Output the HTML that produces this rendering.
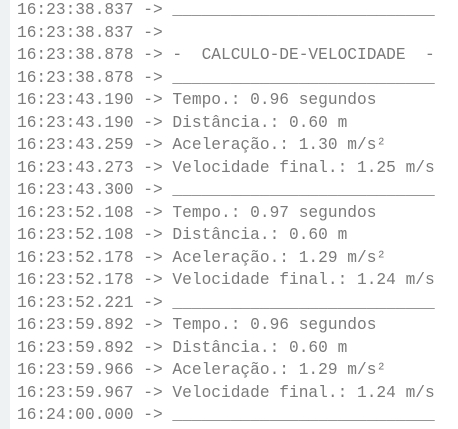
<!DOCTYPE html>
<html><head><meta charset="utf-8"><style>
html,body{margin:0;padding:0;background:#fff;width:458px;height:429px;overflow:hidden}
.strip{position:absolute;left:0;top:0;width:10px;height:429px;background:#eef2f3}
pre{position:absolute;left:17px;top:-1px;margin:0;font-family:"Liberation Mono",monospace;font-size:16.2px;line-height:22.5px;color:#7a7a7a;white-space:pre}
</style></head><body><div class="strip"></div><pre>16:23:38.837 -> ___________________________
16:23:38.837 -> 
16:23:38.878 -> -  CALCULO-DE-VELOCIDADE  -
16:23:38.878 -> ___________________________
16:23:43.190 -> Tempo.: 0.96 segundos
16:23:43.190 -> Distância.: 0.60 m
16:23:43.259 -> Aceleração.: 1.30 m/s²
16:23:43.273 -> Velocidade final.: 1.25 m/s
16:23:43.300 -> ___________________________
16:23:52.108 -> Tempo.: 0.97 segundos
16:23:52.108 -> Distância.: 0.60 m
16:23:52.178 -> Aceleração.: 1.29 m/s²
16:23:52.178 -> Velocidade final.: 1.24 m/s
16:23:52.221 -> ___________________________
16:23:59.892 -> Tempo.: 0.96 segundos
16:23:59.892 -> Distância.: 0.60 m
16:23:59.966 -> Aceleração.: 1.29 m/s²
16:23:59.967 -> Velocidade final.: 1.24 m/s
16:24:00.000 -> ___________________________</pre></body></html>
